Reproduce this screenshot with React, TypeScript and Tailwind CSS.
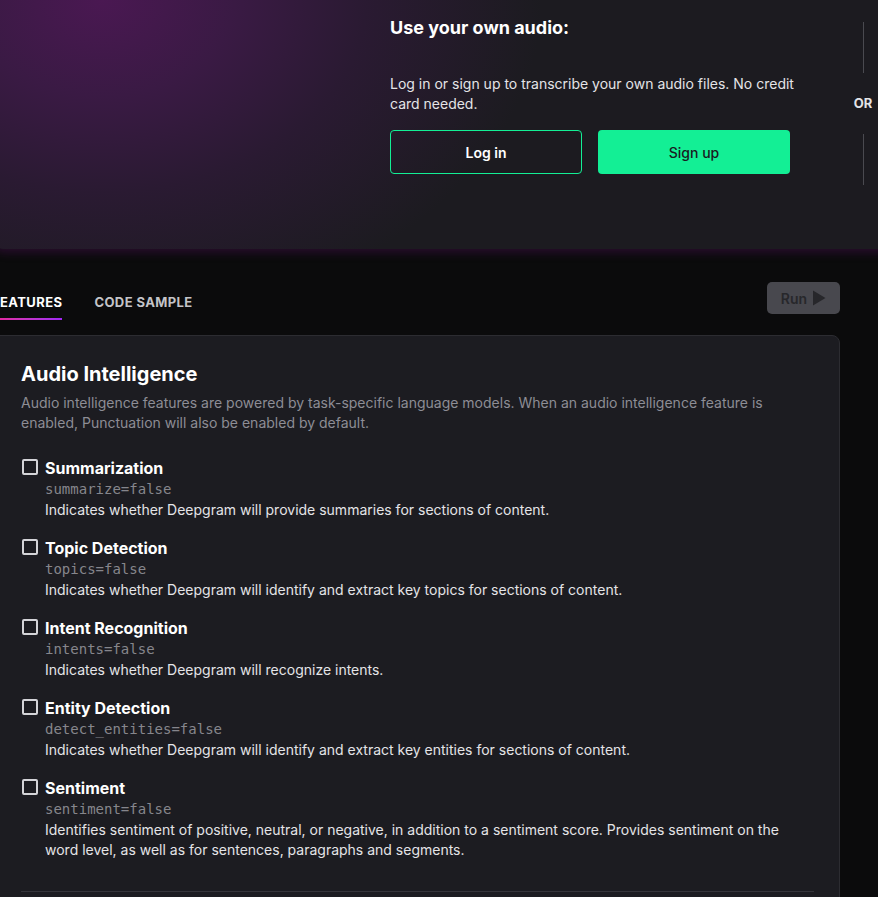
import { useState } from 'react';

type Feature = {
    title: string;
    param: string;
    desc: string;
};

const features: Feature[] = [
    {
        title: 'Summarization',
        param: 'summarize=false',
        desc: 'Indicates whether Deepgram will provide summaries for sections of content.',
    },
    {
        title: 'Topic Detection',
        param: 'topics=false',
        desc: 'Indicates whether Deepgram will identify and extract key topics for sections of content.',
    },
    {
        title: 'Intent Recognition',
        param: 'intents=false',
        desc: 'Indicates whether Deepgram will recognize intents.',
    },
    {
        title: 'Entity Detection',
        param: 'detect_entities=false',
        desc: 'Indicates whether Deepgram will identify and extract key entities for sections of content.',
    },
    {
        title: 'Sentiment',
        param: 'sentiment=false',
        desc: 'Identifies sentiment of positive, neutral, or negative, in addition to a sentiment score. Provides sentiment on the word level, as well as for sentences, paragraphs and segments.',
    },
];

const FeatureRow = (props: Feature & { checked: boolean; onToggle: () => void }) => {
    return (
        <div className="flex items-start">
            <button
                onClick={props.onToggle}
                className="mt-[2px] ml-[1px] w-[16px] h-[16px] shrink-0 border-2 border-[#d4d4d8] rounded-[2px]"
            ></button>
            <div className="ml-[7px] flex flex-col">
                <div className="text-[16px] leading-[22px] font-bold text-white">{props.title}</div>
                <div className="text-[14px] leading-[20px] text-[#86868c] font-['DejaVu_Sans_Mono',monospace]">{props.param}</div>
                <div className="mt-[1px] text-[14px] leading-[20px] text-[#e4e4e7]">{props.desc}</div>
            </div>
        </div>
    );
};

const App = () => {
    const [checked, setChecked] = useState<boolean[]>(features.map(() => false));
    const [tab, setTab] = useState('features');

    return (
        <div className="w-[878px] h-[897px] overflow-hidden bg-[#0b0b0c] font-['Inter',sans-serif]">
            <div className="ml-[-8px] w-[900px]">
                {/* top panel */}
                <div className="relative h-[249px] rounded-bl-[12px] bg-[#1c1b20] shadow-[0_4px_8px_rgba(70,15,80,0.45)] overflow-hidden">
                    <div className="absolute inset-0 bg-[radial-gradient(ellipse_440px_320px_at_110px_0px,#4a1852_0%,#3a1a44_30%,#2a1a32_60%,rgba(28,27,32,0)_100%)]"></div>
                    <div className="relative flex pl-[398px]">
                        <div className="w-[420px] pt-[14px]">
                            <div className="text-[18px] leading-[28px] font-bold text-white">Use your own audio:</div>
                            <p className="mt-[32px] text-[14px] leading-[20px] text-[#e4e4e7]">
                                Log in or sign up to transcribe your own audio files. No credit card needed.
                            </p>
                            <div className="mt-[16px] flex gap-[16px]">
                                <button className="w-[192px] h-[44px] rounded-[4px] border border-[#13ef95] text-white text-[14px] font-semibold">
                                    Log in
                                </button>
                                <button className="w-[192px] h-[44px] rounded-[4px] bg-[#13ef95] text-[#1a1a1f] text-[14px] font-medium">
                                    Sign up
                                </button>
                            </div>
                        </div>
                        <div className="ml-[43px] w-[20px] pt-[22px] flex flex-col items-center">
                            <div className="w-[1px] h-[51px] bg-[#4a4a50]"></div>
                            <div className="h-[61px] flex items-center text-[13px] font-bold text-[#e4e4e7]">OR</div>
                            <div className="w-[1px] h-[51px] bg-[#4a4a50]"></div>
                        </div>
                    </div>
                </div>

                {/* tabs */}
                <div className="mt-[33px] flex items-start w-[848px]">
                    <div className="flex gap-[32px]">
                        <button onClick={() => setTab('features')} className="flex flex-col">
                            <span className={`h-[36px] pt-[10px] text-[13px] leading-[20px] font-bold tracking-[0.4px] ${tab === 'features' ? 'text-white' : 'text-[#c4c4c8]'}`}>FEATURES</span>
                            <span className={`h-[2px] ${tab === 'features' ? 'bg-gradient-to-r from-[#ea1f96] to-[#a126f5]' : ''}`}></span>
                        </button>
                        <button onClick={() => setTab('code')} className="flex flex-col">
                            <span className={`h-[36px] pt-[10px] text-[13px] leading-[20px] font-bold tracking-[0.4px] ${tab === 'code' ? 'text-white' : 'text-[#c4c4c8]'}`}>CODE SAMPLE</span>
                            <span className={`h-[2px] ${tab === 'code' ? 'bg-gradient-to-r from-[#ea1f96] to-[#a126f5]' : ''}`}></span>
                        </button>
                    </div>
                    <button className="ml-auto w-[73px] h-[32px] rounded-[5px] bg-[#48484e] flex items-center justify-center gap-[5px] text-[14px] font-semibold text-[#27272b]">
                        Run
                        <svg width="14" height="16" viewBox="0 0 14 16">
                            <path d="M1 0.5 L13.5 8 L1 15.5 Z" fill="#27272b" />
                        </svg>
                    </button>
                </div>

                {/* card */}
                <div className="mt-[15px] w-[848px] h-[600px] border border-[#2c2c31] rounded-tr-[8px] bg-[#1c1c21] pl-[28px] pr-[25px] pt-[24px]">
                    <div className="text-[20px] leading-[28px] font-bold text-white">Audio Intelligence</div>
                    <p className="mt-[5px] text-[14px] leading-[20px] text-[#8d8d95]">
                        Audio intelligence features are powered by task-specific language models. When an audio intelligence feature is enabled, Punctuation will also be enabled by default.
                    </p>
                    <div className="mt-[24px] flex flex-col gap-[17px]">
                        {features.map((f, i) => (
                            <FeatureRow
                                key={f.param}
                                {...f}
                                checked={checked[i]}
                                onToggle={() => setChecked(checked.map((c, j) => (j === i ? !c : c)))}
                            />
                        ))}
                    </div>
                    <div className="mt-[31px] h-[1px] bg-[#34343a]"></div>
                </div>
            </div>
        </div>
    );
};

export default App;
